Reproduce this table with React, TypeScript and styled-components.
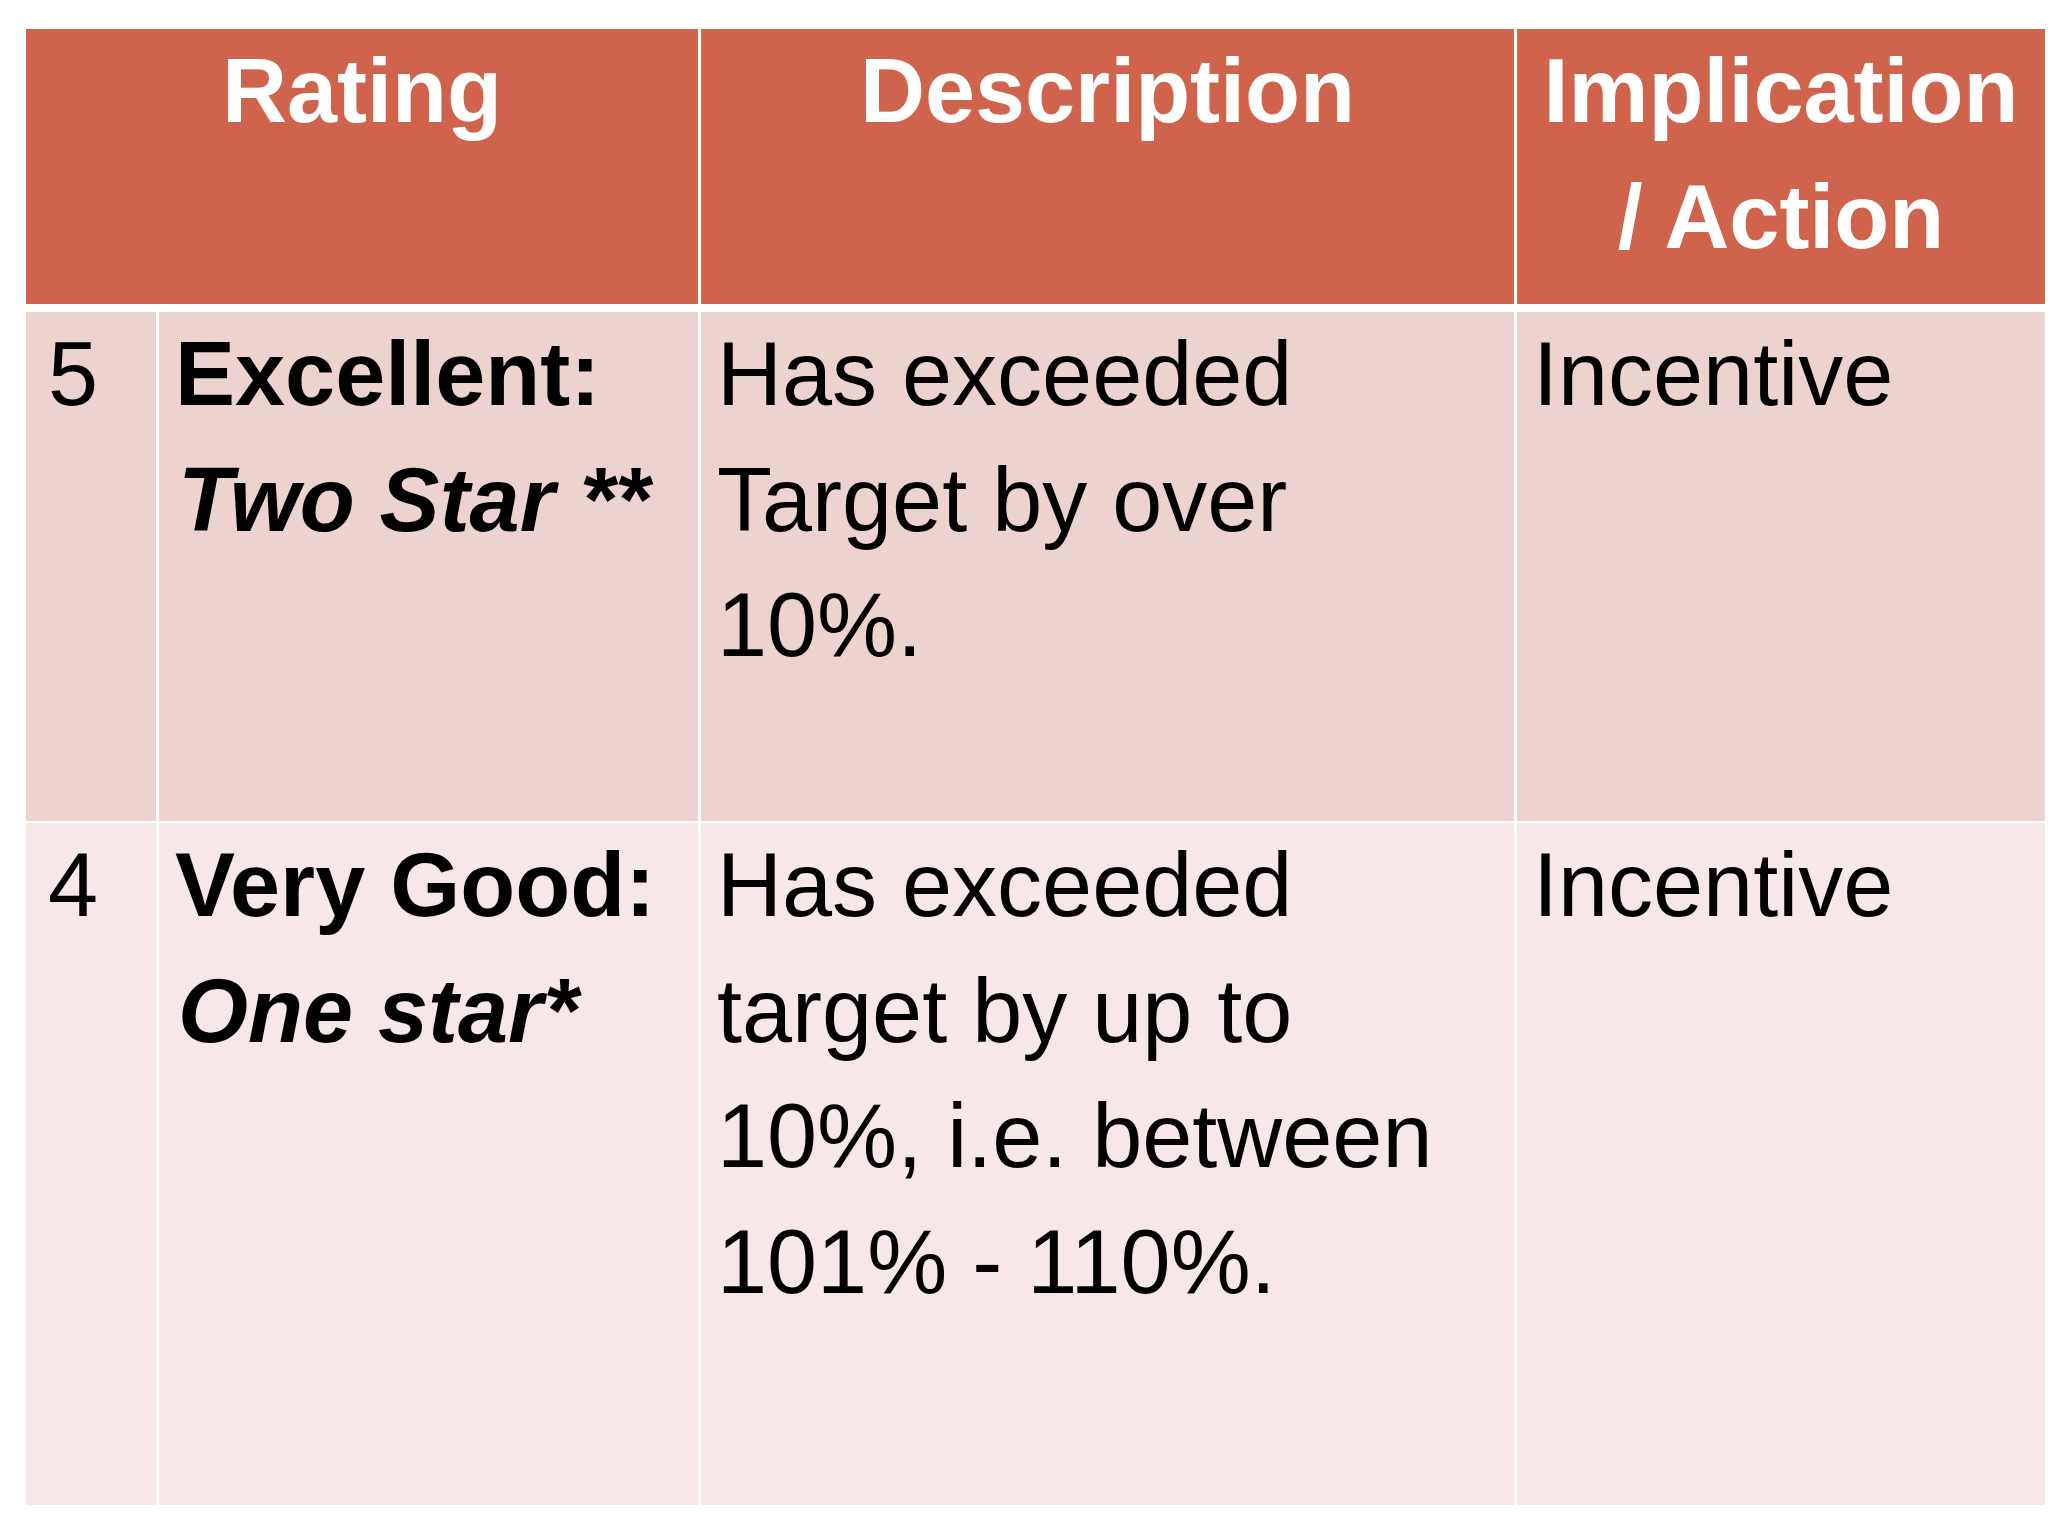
import React from 'react'
import styled, { createGlobalStyle } from 'styled-components'

const GlobalStyle = createGlobalStyle`
  html, body {
    margin: 0;
    padding: 0;
    background: #ffffff;
  }
  body {
    font-family: "Liberation Sans", Arial, sans-serif;
  }
`

const COLUMNS = '130px 539px 813px 528px'

type Tone = 'head' | 'dark' | 'light'

const tones: {[key in Tone]: string} = {
  head: '#d0634b',
  dark: '#edd3d0',
  light: '#f6e7e9',
}

type RowData = {
  score: string
  title: string
  stars: string
  description: string[]
  action: string
  tone: Tone
  height: number
}

const rows: RowData[] = [
  {
    score: '5',
    title: 'Excellent:',
    stars: 'Two Star **',
    description: ['Has exceeded', 'Target by over', '10%.'],
    action: 'Incentive',
    tone: 'dark',
    height: 509,
  },
  {
    score: '4',
    title: 'Very Good:',
    stars: 'One star*',
    description: ['Has exceeded', 'target by up to', '10%, i.e. between', '101% - 110%.'],
    action: 'Incentive',
    tone: 'light',
    height: 682,
  },
]

export default function App() {
  return (
    <>
      <GlobalStyle />
      <Table>
        <HeadRow>
          <HeadCell $span={2}>Rating</HeadCell>
          <HeadCell>Description</HeadCell>
          <HeadCell>
            Implication<br />/ Action
          </HeadCell>
        </HeadRow>

        {rows.map((row) =>
          <Row key={row.score} $height={row.height}>
            <Cell $tone={row.tone} $indent={22}>{row.score}</Cell>
            <Cell $tone={row.tone}>
              <Strong>{row.title}</Strong>
              <br />
              <Stars>{row.stars}</Stars>
            </Cell>
            <Cell $tone={row.tone}>
              {row.description.map((line, i) =>
                <Line key={i}>{line}</Line>
              )}
            </Cell>
            <Cell $tone={row.tone}>{row.action}</Cell>
          </Row>
        )}
      </Table>
    </>
  )
}

const Table = styled.div`
  display: flex;
  flex-direction: column;
  gap: 2px;
  width: 2019px;
  margin: 29px 0 0 26px;
  font-family: "Liberation Sans", Arial, sans-serif;
  font-size: 90px;
  line-height: 125.5px;
`

const HeadRow = styled.div`
  display: grid;
  grid-template-columns: ${COLUMNS};
  column-gap: 3px;
  height: 275px;
  margin-bottom: 6px;
`

const HeadCell = styled.div<{ $span?: number }>`
  grid-column: span ${p => p.$span || 1};
  background: ${tones.head};
  color: #ffffff;
  font-weight: 700;
  text-align: center;
  padding: 0 13px;
`

const Row = styled.div<{ $height: number }>`
  display: grid;
  grid-template-columns: ${COLUMNS};
  column-gap: 3px;
  height: ${p => p.$height}px;
`

const Cell = styled.div<{ $tone: Tone, $indent?: number }>`
  background: ${p => tones[p.$tone]};
  color: #000000;
  padding: 0 13px 0 ${p => p.$indent ?? 16}px;
  white-space: nowrap;
`

const Strong = styled.span`
  font-weight: 700;
`

const Stars = styled.span`
  font-weight: 700;
  font-style: italic;
  padding-left: 3px;
`

const Line = styled.div``
